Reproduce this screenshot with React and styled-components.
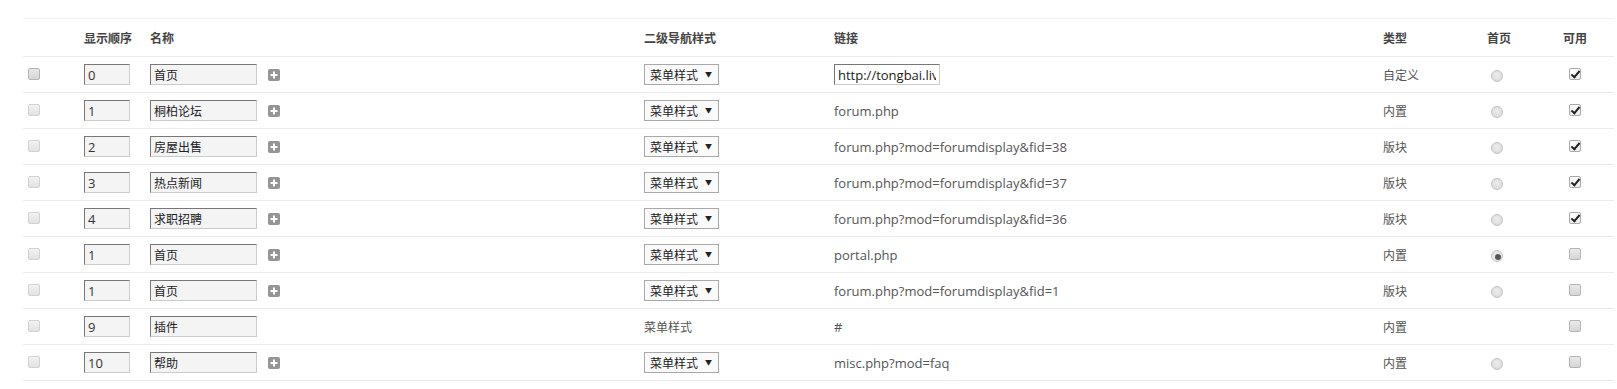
import React from 'react';
import styled, { createGlobalStyle } from 'styled-components';

const Global = createGlobalStyle`
  body {
    margin: 0;
    background: #fff;
    font-family: "Open Sans", "Noto Sans CJK SC", sans-serif;
    font-size: 12px;
    color: #555;
  }
`

const Wrap = styled.div`
  padding: 18px 3px 0 23px;
`

const Table = styled.table`
  width: 100%;
  border-collapse: collapse;
  table-layout: fixed;
  border-top: 1px solid #f2f2f2;
`

const Row = styled.tr`
  height: ${props => props.head ? 38 : 36}px;
  border-bottom: 1px solid #ececec;
`

const Th = styled.th`
  text-align: left;
  font-weight: bold;
  color: #444;
  padding: 0 0 0 5px;
  width: ${props => props.w ? props.w + 'px' : 'auto'};
  font-size: 12px;
`

const Td = styled.td`
  padding: 0 0 0 5px;
  vertical-align: middle;
  white-space: nowrap;
  overflow: hidden;
`

const Check = styled.input.attrs({ type: 'checkbox' })`
  appearance: none;
  margin: 0 0 0 ${props => props.ml || 0}px;
  width: 12px;
  height: 12px;
  border: 1px solid ${props => props.dim ? '#d2d2d2' : '#b5b5b5'};
  border-radius: 2px;
  background: ${props => props.dim ? 'linear-gradient(#f2f2f2, #e2e2e2)' : 'linear-gradient(#e9e9e9, #d6d6d6)'};
  vertical-align: middle;
  position: relative;
  top: -2px;
  &:checked {
    background: linear-gradient(#fff, #ececec);
    border-color: #aaa;
  }
  &:checked::after {
    content: '';
    position: absolute;
    left: 3px;
    top: 0px;
    width: 3px;
    height: 7px;
    border: solid #222;
    border-width: 0 2px 2px 0;
    transform: rotate(40deg);
  }
`

const Radio = styled.input.attrs({ type: 'radio' })`
  appearance: none;
  margin: 0 0 0 4px;
  width: 12px;
  height: 12px;
  border: 1px solid #c4c4c4;
  border-radius: 50%;
  background: radial-gradient(circle at 50% 40%, #ececec, #d8d8d8);
  vertical-align: middle;
  position: relative;
  &:checked {
    background: #e8e8e8;
  }
  &:checked::after {
    content: '';
    position: absolute;
    left: 3px;
    top: 3px;
    width: 6px;
    height: 6px;
    border-radius: 50%;
    background: #555;
  }
`

const TextInput = styled.input`
  box-sizing: border-box;
  width: ${props => props.w}px;
  height: 21px;
  padding: 0 3px;
  font: ${props => props.fs || 12}px "Open Sans", "Noto Sans CJK SC", sans-serif;
  color: ${props => props.dark ? '#222' : '#333'};
  background: ${props => props.white ? '#fff' : '#f4f4f4'};
  border: 1px solid #ccc;
  border-top-color: #777;
  border-left-color: #777;
  vertical-align: middle;
  outline: none;
`

const NameCell = styled.div`
  display: flex;
  align-items: center;
  gap: 11px;
`

const Plus = styled.span`
  display: inline-flex;
  width: 12px;
  height: 12px;
  border-radius: 2px;
  background: #959595;
`

const Select = styled.div`
  display: inline-flex;
  align-items: center;
  justify-content: space-between;
  box-sizing: border-box;
  width: 75px;
  height: 21px;
  padding: 0 6px 0 5px;
  border: 1px solid #a9a9a9;
  background: #fafafa;
  color: #222;
  font-size: 12px;
  vertical-align: middle;
`

const Arrow = styled.span`
  font-size: 7px;
  color: #222;
  margin-top: -2px;
`

const Muted = styled.span`
  color: #555;
`

const LinkText = styled.span`
  font-size: 13px;
  color: #555;
`

const rows = [
  { order: '0', name: '首页', sub: true, link: 'http://tongbai.live', edit: true, type: '自定义', home: 'off', on: true, first: true },
  { order: '1', name: '桐柏论坛', sub: true, link: 'forum.php', type: '内置', home: 'off', on: true },
  { order: '2', name: '房屋出售', sub: true, link: 'forum.php?mod=forumdisplay&fid=38', type: '版块', home: 'off', on: true },
  { order: '3', name: '热点新闻', sub: true, link: 'forum.php?mod=forumdisplay&fid=37', type: '版块', home: 'off', on: true },
  { order: '4', name: '求职招聘', sub: true, link: 'forum.php?mod=forumdisplay&fid=36', type: '版块', home: 'off', on: true },
  { order: '1', name: '首页', sub: true, link: 'portal.php', type: '内置', home: 'on', on: false },
  { order: '1', name: '首页', sub: true, link: 'forum.php?mod=forumdisplay&fid=1', type: '版块', home: 'off', on: false },
  { order: '9', name: '插件', sub: false, link: '#', type: '内置', home: null, on: false },
  { order: '10', name: '帮助', sub: true, link: 'misc.php?mod=faq', type: '内置', home: 'off', on: false },
]

const PlusIcon = () => (
  <Plus>
    <svg width="12" height="12" viewBox="0 0 12 12">
      <path d="M6 2.5v7M2.5 6h7" stroke="#fff" strokeWidth="2" />
    </svg>
  </Plus>
)

export default function App() {
  return (
    <Wrap>
      <Global />
      <Table>
        <thead>
          <Row head>
            <Th w={51}></Th>
            <Th w={61}>显示顺序</Th>
            <Th w={489}>名称</Th>
            <Th w={185}>二级导航样式</Th>
            <Th w={544}>链接</Th>
            <Th w={99}>类型</Th>
            <Th w={71}>首页</Th>
            <Th>可用</Th>
          </Row>
        </thead>
        <tbody>
          {rows.map((r, i) => (
            <Row key={i}>
              <Td><Check dim={!r.first} readOnly /></Td>
              <Td><TextInput w={46} fs={13} defaultValue={r.order} /></Td>
              <Td>
                <NameCell>
                  <TextInput w={107} dark defaultValue={r.name} />
                  {r.sub && <PlusIcon />}
                </NameCell>
              </Td>
              <Td>
                {r.sub ? (
                  <Select>菜单样式<Arrow>▼</Arrow></Select>
                ) : (
                  <Muted>菜单样式</Muted>
                )}
              </Td>
              <Td>
                {r.edit ? (
                  <TextInput w={106} fs={13} white dark defaultValue={r.link} />
                ) : (
                  <LinkText>{r.link}</LinkText>
                )}
              </Td>
              <Td><Muted>{r.type}</Muted></Td>
              <Td>{r.home && <Radio defaultChecked={r.home === 'on'} />}</Td>
              <Td><Check ml={6} defaultChecked={r.on} /></Td>
            </Row>
          ))}
        </tbody>
      </Table>
    </Wrap>
  );
}
